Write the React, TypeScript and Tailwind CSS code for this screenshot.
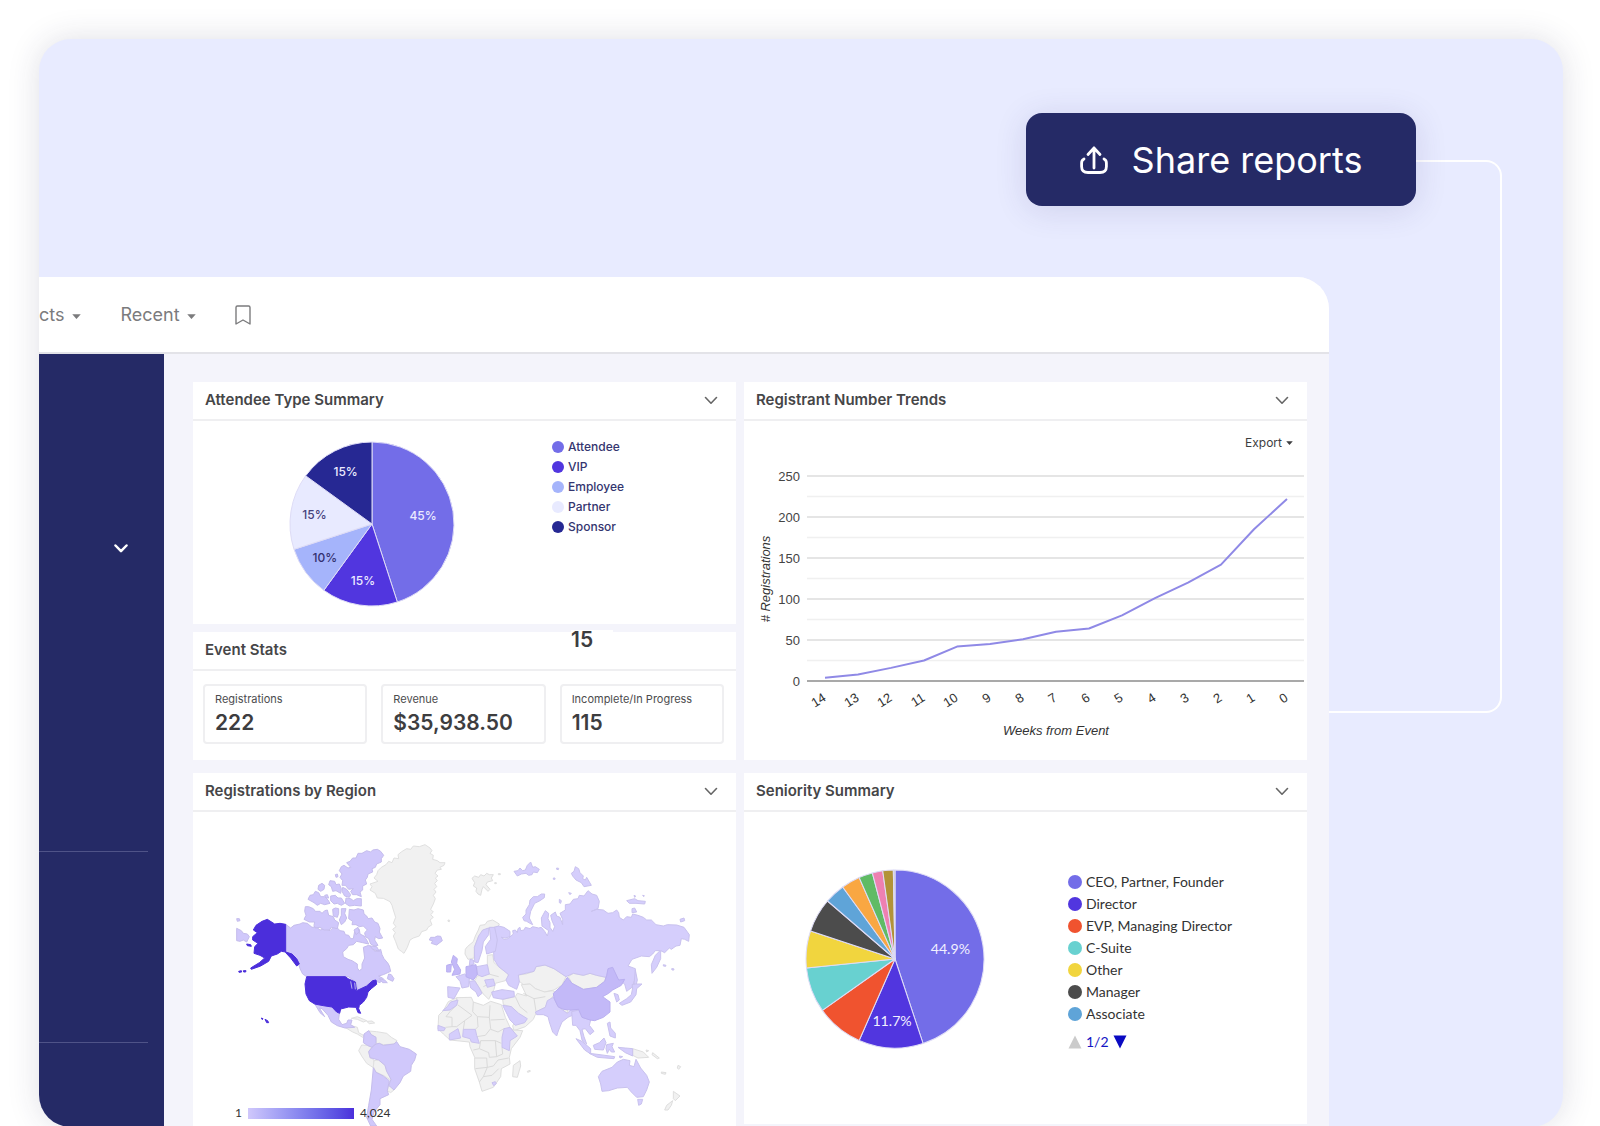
import { useId } from "react";
import type { ReactNode } from "react";

interface Slice {
  value: number;
  color: string;
  label?: string;
  text?: string;
  textColor?: string;
}

const attendeeTypes: Slice[] = [
  { label: "Attendee", value: 45, color: "#736de8", text: "45%", textColor: "#ecebff" },
  { label: "VIP", value: 15, color: "#5136df", text: "15%", textColor: "#ecebff" },
  { label: "Employee", value: 10, color: "#a5b4fb", text: "10%", textColor: "#34306f" },
  { label: "Partner", value: 15, color: "#e8eaff", text: "15%", textColor: "#45427c" },
  { label: "Sponsor", value: 15, color: "#262893", text: "15%", textColor: "#ecebff" },
];

const seniority: Slice[] = [
  { label: "CEO, Partner, Founder", value: 44.9, color: "#736de8", text: "44.9%", textColor: "#f1f0ff" },
  { label: "Director", value: 11.7, color: "#5136df", text: "11.7%", textColor: "#f1f0ff" },
  { label: "EVP, Managing Director", value: 8.6, color: "#f0532f" },
  { label: "C-Suite", value: 8.2, color: "#68d1d0" },
  { label: "Other", value: 6.7, color: "#f1d53e" },
  { label: "Manager", value: 6.2, color: "#4c4c4c" },
  { label: "Associate", value: 3.7, color: "#5fa4d8" },
  { value: 3.4, color: "#f9a742" },
  { value: 2.5, color: "#60bb65" },
  { value: 1.9, color: "#ee80b1" },
  { value: 1.9, color: "#b29338" },
  { value: 0.3, color: "#c9c9c9" },
];

const stats = [
  { label: "Registrations", value: "222" },
  { label: "Revenue", value: "$35,938.50" },
  { label: "Incomplete/In Progress", value: "115" },
];

const trend = [4, 8, 16, 25, 42, 45, 51, 60, 64, 80, 101, 120, 142, 185, 222];

function Chevron({ className }: { className?: string }) {
  return (
    <svg viewBox="0 0 14 9" className={className} fill="none" stroke="currentColor" strokeLinecap="round" strokeLinejoin="round">
      <path d="M1.5 1.5 7 7.2l5.5-5.7" />
    </svg>
  );
}

function Caret({ className }: { className?: string }) {
  return (
    <svg viewBox="0 0 10 6" className={className} fill="currentColor">
      <path d="M.3.4h9.4L5 5.6z" />
    </svg>
  );
}

function Card({ title, collapsible = true, children }: { title: string; collapsible?: boolean; children: ReactNode }) {
  return (
    <section className="relative bg-white">
      <header className="flex h-[39px] items-center justify-between border-b-2 border-[#efeff1] pl-3 pr-[18px]">
        <h2 className="text-[15px] font-semibold text-[#464648]">{title}</h2>
        {collapsible && (
          <button type="button" aria-label={`Collapse ${title}`} className="text-[#666]">
            <Chevron className="h-[9px] w-[14px] stroke-[1.6]" />
          </button>
        )}
      </header>
      {children}
    </section>
  );
}

function Pie({ slices, r, className, textClass }: { slices: Slice[]; r: number; className: string; textClass: string }) {
  const total = slices.reduce((sum, s) => sum + s.value, 0);
  const point = (share: number, dist: number) => {
    const a = share * Math.PI * 2;
    return [Math.sin(a) * dist, -Math.cos(a) * dist];
  };
  let start = 0;
  return (
    <svg viewBox={`${-r - 1} ${-r - 1} ${r * 2 + 2} ${r * 2 + 2}`} className={className}>
      {slices.map((s) => {
        const from = start / total;
        start += s.value;
        const to = start / total;
        const [x1, y1] = point(from, r);
        const [x2, y2] = point(to, r);
        // narrow slices carry their label nearer the rim
        const [tx, ty] = point((from + to) / 2, r * (s.value > 20 ? 0.63 : 0.71));
        return (
          <g key={s.color}>
            <path
              d={`M0 0L${x1} ${y1}A${r} ${r} 0 ${to - from > 0.5 ? 1 : 0} 1 ${x2} ${y2}Z`}
              fill={s.color}
              stroke="#dedcf6"
              strokeWidth={1}
              strokeLinejoin="round"
            />
            {s.text && (
              <text x={tx} y={ty} dy="0.3em" textAnchor="middle" fill={s.textColor} className={textClass}>
                {s.text}
              </text>
            )}
          </g>
        );
      })}
    </svg>
  );
}

function TrendChart() {
  const y = (v: number) => 228 - v * 0.82;
  const x = (i: number) => 81 + i * 33;
  return (
    <svg viewBox="0 0 563 307" className="w-full font-['Liberation_Sans',Arial,sans-serif] text-[13px]">
      {[25, 75, 125, 175, 225].map((v) => (
        <path key={v} d={`M63 ${y(v)}H560`} stroke="#f0f0f0" strokeWidth={1.5} />
      ))}
      {[0, 50, 100, 150, 200, 250].map((v) => (
        <g key={v}>
          <path d={`M63 ${y(v)}H560`} stroke={v === 0 ? "#8c8c8c" : "#dcdcdc"} strokeWidth={1.5} />
          <text x={56} y={y(v)} dy="0.36em" textAnchor="end" fill="#444">
            {v}
          </text>
        </g>
      ))}
      <polyline
        points={trend.map((v, i) => `${x(i)},${y(v)}`).join(" ")}
        fill="none"
        stroke="#8f89e6"
        strokeWidth={2}
        strokeLinejoin="round"
      />
      {trend.map((_, i) => (
        <text key={i} textAnchor="end" fill="#333" transform={`translate(${x(i) + 2} 247) rotate(-32)`}>
          {14 - i}
        </text>
      ))}
      <text textAnchor="middle" fill="#333" className="italic" transform="translate(26 126) rotate(-90)">
        # Registrations
      </text>
      <text x={312} y={282} textAnchor="middle" fill="#333" className="italic">
        Weeks from Event
      </text>
    </svg>
  );
}

// Countries without registrations
const emptyWest = [
  "M545 65L560 56 572 58 580 48 598 50 615 44 630 54 636 62 630 70 640 76 638 88 652 92 660 98 675 98 672 106 660 112 664 118 652 120 645 130 654 138 646 144 652 152 644 160 650 170 642 178 648 186 640 196 646 206 640 222 632 238 640 246 632 254 640 262 630 270 636 284 624 292 620 300 605 305 598 318 580 324 570 330 562 352 552 370 544 364 535 357 527 335 520 318 526 308 518 298 528 290 520 280 527 262 520 240 516 226 510 215 490 205 472 204 466 190 450 180 456 170 450 162 474 154 462 144 470 134 474 122 484 112 498 104 506 94 516 98 522 84 536 86 534 74Z",
  "M375 592L392 586 412 592 416 608 434 618 428 622 412 612 398 606Z",
  "M394 565L412 560 440 572 430 576 412 568ZM440 574l16-1 8 6-16 2Z",
  "M446 603L470 605 500 610 514 622 531 632 522 642 490 644 478 640 468 642 468 622 454 614Z",
  "M425 645L442 646 456 652 446 664 450 683 462 690 460 713 440 700 425 678 416 662Z",
  "M462 692L476 690 495 706 500 724 512 736 512 750 490 736 468 726 460 710Z",
  "M504 768l12 0 6 12-10 8-10-6Z",
];
const emptyEast = [
  "M126 145L134 138 146 142 152 134 162 138 170 130 178 134 190 134 184 144 188 152 172 156 168 164 180 178 174 184 160 170 156 178 152 196 144 192 138 184 140 174 130 168 134 158Z",
  "M105 372L106 358 112 350 130 335 136 318 145 300 150 286 165 284 172 274 188 270 208 282 204 290 194 292 168 296 146 318 134 350 132 384 114 388Z",
  "M172 376L188 374 192 398 206 410 232 430 236 438 226 452 196 460 192 478 176 508 160 492 148 474 134 452 142 438 176 432 172 404Z",
  "M265 435L288 432 312 424 318 410 345 405 372 416 408 440 396 465 372 480 342 486 316 476 300 462 280 464 266 452Z",
  "M274 464L300 462 316 476 344 486 368 482 378 488 352 518 346 532 320 545 310 568 286 590 252 602 248 588 262 560 244 530 220 524 218 508 256 500 262 490 290 498Z",
  "M415 440L430 430 460 436 480 430 500 436 528 442 524 454 500 472 460 478 426 460Z",
  "M384 530L414 542 412 550 386 540Z",
  "M55 515L80 503 124 502 130 516 160 526 182 514 214 524 226 562 240 592 250 600 278 602 270 622 244 656 238 682 240 702 214 716 212 740 190 772 156 784 148 756 134 716 134 682 120 650 118 636 60 630 40 612 24 596 26 556 40 542Z",
  "M250 706L270 692 272 708 262 742 248 740Z",
  "M608 656L640 666 656 682 624 684 608 676ZM648 660l8 2-6 4ZM668 668l20 16-6 2-16-12ZM694 726l14 2-2 5-12-3ZM744 706l8 4-6 8-4-4Z",
  "M730 784L750 798 736 812 730 806ZM728 812l-4 14-10 14-10 0 6-14Z",
  "M205 131l6 0 0 3-6 0ZM54 270l5 1-1 4-4-1ZM194 158l5 0 0 3-5 0ZM292 724l8-3 1 3-8 3Z",
];

// Countries with at least one registration
const lightWest = [
  "M50 295L64 302 70 310 82 312 88 320 80 336 70 330 60 334 50 332ZM50 266l8 0 2 6-8 2Z",
  "M197 283L212 294 222 286 240 282 248 278 262 280 276 292 288 290 300 300 316 296 330 302 342 290 350 292 360 302 372 304 376 314 386 316 392 326 400 326 404 304 418 298 420 312 432 318 440 330 446 342 428 338 410 334 400 344 386 346 380 356 368 366 370 380 384 388 396 392 412 402 412 414 418 422 426 416 426 402 434 384 430 352 446 346 456 350 462 362 470 364 482 358 486 374 492 386 504 400 508 408 512 424 490 434 476 438 490 446 480 458 468 454 458 452 440 466 414 482 408 456 385 440 260 440 248 432 240 416 236 402 215 372 197 366Z",
  "M506 432L514 434 522 446 518 454 502 446ZM478 446l16 4 8 8-14 0Z",
  "M380 98L390 94 398 84 408 84 414 70 426 70 440 62 452 66 458 60 472 58 482 64 491 76 484 86 484 96 470 102 466 112 456 116 458 126 444 132 442 142 436 150 440 162 428 168 428 180 420 186 424 200 410 194 398 194 392 184 400 176 386 178 376 166 366 166 368 152 360 142 366 132 358 122 364 110 372 106 384 114 392 112Z",
  "M378 204L392 206 400 212 410 206 424 206 424 228 404 226 388 228 376 220Z",
  "M330 152l14 2 4 10 10-2 6 14-2 14-14-8-10 2-4-14-8-6ZM296 166l10-6 8 6-2 12-10 6-8-6ZM264 208l6-12 10-2 6-10 10 4 6 12 12 0 10 10 6 10-16 4-12-4-10 6-10-8ZM332 198l14-2 8 8 10 0 10 16-10 6-12-6-10 2-10-10ZM346 134l6-2 2 8-6 2ZM368 172l12 6 12 16-4 8-14-4-8-14ZM314 196l8-2 4 10-8 0Z",
  "M256 230L266 230 280 236 286 244 300 244 306 250 314 242 322 240 326 256 340 260 344 270 356 278 352 296 334 292 328 300 312 300 300 292 286 294 282 286 284 276 268 276 252 268 258 256 254 244ZM338 238l8-4 10 2 0 14-4 12-12-4ZM364 236l14 0-4 14 6 14-6 12-10 8-6-14 6-14Z",
  "M388 238L402 240 414 236 430 240 432 252 440 258 444 266 456 264 464 276 474 280 480 296 478 306 488 324 476 326 466 320 464 330 474 346 462 348 452 342 446 326 436 320 434 308 442 300 430 288 418 290 408 284 396 284 398 274 386 266ZM402 300l12-8 4 14-10 8ZM450 348l20 2 8 14-20-6Z",
  "M632 322L644 322 652 318 662 319 667 332 650 345 634 340 638 332 628 330Z",
  "M285 523L310 527 335 531 350 546 358 551 356 568 366 584 380 580 384 570 396 570 392 584 404 592 375 594 352 587 334 576 324 556 306 536 298 534 314 560 300 548Z",
  "M432 612L446 602 454 614 468 622 468 640 456 652 442 646 430 638Z",
  "M446 665L456 652 468 642 478 640 490 646 522 642 530 635 540 650 568 658 589 672 584 690 574 706 572 724 550 738 540 758 522 780 506 766 513 748 500 724 495 706 476 690 450 683Z",
  "M460 713L468 727 490 738 508 752 502 782 506 794 480 806 480 824 462 846 456 868 470 888 452 888 440 862 446 826 454 780Z",
];
const lightEast = [
  "M190 350L200 330 192 292 206 288 222 292 240 304 240 320 226 324 214 322 222 328 234 326 250 312 248 302 256 300 262 308 264 296 270 292 272 302 282 300 286 292 300 296 308 290 326 294 334 292 344 304 352 318 356 302 336 288 334 264 346 242 356 250 354 266 360 278 360 292 368 304 374 290 366 272 362 256 376 246 380 258 390 262 398 284 398 268 390 250 406 240 406 224 420 222 430 208 444 206 448 196 462 198 474 182 486 192 500 196 508 214 504 236 484 244 500 238 520 240 534 250 548 248 560 240 566 248 568 262 580 270 590 260 604 262 608 252 624 256 640 262 650 270 664 270 678 284 700 288 712 284 740 285 762 292 778 314 776 334 764 328 754 326 750 346 738 348 724 358 718 354 704 368 692 362 692 386 680 412 666 430 664 404 676 376 690 362 676 362 668 372 658 380 634 378 606 388 594 408 616 416 617 442 606 472 590 484 584 462 566 450 550 435 528 442 500 436 480 430 460 436 430 430 408 440 372 416 345 405 318 410 312 424 265 435 268 456 260 478 236 466 228 450 236 434 206 410 192 388Z",
  "M344 192L334 192 322 200 310 200 300 210 298 224 288 240 288 252 278 262 282 272 290 274 300 280 308 284 298 264 302 244 314 220 330 212 343 203Z",
  "M252 124L264 122 270 114 278 122 286 120 292 106 302 96 308 112 316 110 328 118 322 128 310 126 306 134 296 136 288 130 274 132 262 138ZM424 130l8-6 4-14 10 6 4 12 10 10-2 8 8 4 4-8 14 24-22 4-8-12-16-8-10-12ZM590 212l24-6 10 6 22 2-2 8-26-2-20 0ZM606 236l8-2 6 12-14 2ZM750 268l12-4 2 8-12 4ZM416 188l8 2-4 4ZM388 208l6 4-2 8-4-2ZM370 144l5 0 0 4-5 0ZM380 114l6 1-1 4-5-1ZM612 196l5 2-3 4ZM638 196l5 1-2 3ZM700 404l8 2-1 3-7-1ZM725 416l6 0 1 4-6 0Z",
  "M616 420L622 450 618 466 612 462Z",
  "M134 396L133 352 146 318 158 300 176 294 176 314 160 336 156 362 144 398Z",
  "M178 292L194 292 202 330 196 364 170 372 166 350 182 328Z",
  "M140 410L172 404 178 432 156 440 142 434Z",
  "M78 440L104 432 118 446 116 470 96 474 90 454Z",
  "M53 470L90 474 82 488 72 506 54 502Z",
  "M118 454L134 452 148 474 156 490 144 500 138 486 122 474Z",
  "M164 450L190 447 195 466 172 472Z",
  "M120 388l10 2 2 12-14 4Z",
  "M185 486L216 479 252 484 253 500 218 508 190 503Z",
  "M218 526L244 530 266 550 292 566 284 578 256 586 240 570Z",
  "M62 516L84 510 80 526 60 540 38 542 52 530Z",
  "M24 586L46 594 42 602 24 602Z",
  "M58 612L84 596 92 624 58 630Z",
  "M100 598L136 598 140 616 148 640 124 636 120 626 98 620Z",
  "M222 596L240 592 262 618 240 632 238 662 216 652 216 622Z",
  "M186 758l10-3 3 6-8 6Z",
  "M316 546L346 532 352 512 370 502 384 530 412 550 422 540 446 538 440 550 414 562 396 576 386 600 380 618 368 606 358 576 354 560 340 554 320 554Z",
  "M425 545L446 540 456 562 482 570 478 586 492 604 480 614 466 596 456 598 462 620 470 642 456 630 450 602 438 586 428 586Z",
  "M438 626L456 634 482 656 482 672 464 660ZM478 670l32 4 44 6-2 6-50-4ZM490 646l18-8 14-14 6 14-8 22-26-2ZM530 644l20-4-4 10 8 16-10 0-6-8-6 12-4-14ZM532 580l8-4 2 18 14 16 0 14-16-6ZM564 652l22 2 22 2 0 22-22-10ZM568 678l10 2-8 4Z",
  "M505 740L516 724 546 712 562 696 580 688 600 692 598 706 612 710 618 688 632 714 650 736 658 756 650 780 640 800 620 802 604 786 592 772 562 774 536 782 516 784 512 762ZM623 808l15 0-4 14-8 4Z",
  "M568 520L590 506 604 494 608 474 606 464 616 462 636 462 620 476 618 494 602 516 576 526ZM552 490l12 4 4 16-8 6Z",
];
const mediumEast = [
  "M370 490L396 466 412 442 426 460 460 478 500 472 524 454 530 436 534 416 548 412 566 450 584 448 574 466 548 480 536 490 518 500 540 516 540 546 520 562 494 572 480 570 456 562 446 538 422 540 400 538 384 530 372 504Z",
  "M108 410L138 404 142 434 130 450 108 440Z",
  "M70 376L82 386 80 400 92 420 90 432 66 436 74 418 64 396ZM50 406L64 402 62 426 50 426Z",
];
const unitedStates = [
  "M197 283L180 280 164 282 142 268 126 274 108 286 100 300 112 308 98 320 98 330 114 340 104 350 102 370 120 376 134 384 118 398 92 414 94 418 122 408 146 394 154 378 172 372 184 364 197 366 216 372 230 386 238 402 230 408 212 384 197 368Z",
  "M260 440L376 440 384 446 406 456 410 482 440 468 458 452 468 450 470 463 454 476 444 486 440 502 430 516 418 526 416 536 422 550 414 548 408 532 386 531 362 537 359 550 350 546 336 531 310 527 284 522 268 512 258 492 255 462Z",
  "M56 424l8-2 1 4-8 1ZM70 422l8 0-1 4-6 0ZM80 342l12 2 2 5-12-2ZM124 564l5 2-2 3ZM135 568l8 4 3 6-6 0Z",
];

const africaBorders =
  "M80 503L80 525 60 545 48 560 66 562 66 590 46 592M84 525L126 556 104 572 100 598M130 516L128 545 142 560 178 562 180 526M142 560L144 590 136 598M178 562L182 596 166 616 140 620M182 570L224 568M222 596L204 606 182 598M104 572L80 590 66 590M152 632L196 632 214 640M152 632L148 656 130 660M196 632L200 680 178 682 176 668 148 656M134 684L170 684 172 712 136 716M172 712L160 740 148 756M172 712L190 708 204 690 236 684M160 740L186 736 206 716M200 680L218 672 216 652";
const asiaBorders =
  "M280 490L312 506 346 500M256 500L270 530 292 548M312 506L318 544M176 432L206 440M160 470L176 462";

function WorldMap() {
  const draw = (paths: string[], fill: string, stroke: string) =>
    paths.map((d, i) => <path key={i} d={d} fill={fill} stroke={stroke} strokeWidth={3} strokeLinejoin="round" />);
  return (
    <svg viewBox="-81 -54 1629 945" className="w-full" role="img" aria-label="World map of registrations">
      {draw(emptyWest, "#f1f1f1", "#e0e0e0")}
      {draw(lightWest, "#d0c8fb", "#c5bdec")}
      {draw(unitedStates, "#4b2edb", "#4b2edb")}
      <path d="M392 454l4 22M404 458l2 20" stroke="#b8aff0" strokeWidth={3} />
      <g transform="translate(630 0)">
        {draw(emptyEast, "#f1f1f1", "#dedede")}
        <path d={africaBorders} fill="none" stroke="#dadada" strokeWidth={3} />
        <path d={asiaBorders} fill="none" stroke="#dadada" strokeWidth={3} />
        {draw(lightEast, "#d5cefc", "#c9c2ee")}
        {draw(mediumEast, "#c3b9f8", "#b9aff0")}
      </g>
    </svg>
  );
}

function MapScale() {
  const id = useId();
  return (
    <div className="absolute bottom-1 left-[42px] flex items-center gap-1.5 font-['Lato',sans-serif] text-xs leading-5 text-[#333]">
      <span id={id}>1</span>
      <div aria-labelledby={id} className="h-[11px] w-[106px] bg-linear-to-r from-[#d0c8fb] to-[#4b2edb]" />
      <span>4,024</span>
    </div>
  );
}

function AttendeeCard() {
  return (
    <Card title="Attendee Type Summary">
      <div className="flex h-[203px] items-start pl-24 pt-4">
        <Pie slices={attendeeTypes} r={82} className="mt-1 size-[166px]" textClass="text-xs font-medium" />
        <ul className="ml-[97px] text-[#34356f]">
          {attendeeTypes.map((s) => (
            <li key={s.label} className="flex items-center gap-1 text-xs leading-5 font-medium">
              <span className="size-3 rounded-full" style={{ backgroundColor: s.color }} />
              {s.label}
            </li>
          ))}
        </ul>
      </div>
    </Card>
  );
}

function StatsCard() {
  return (
    <Card title="Event Stats" collapsible={false}>
      <span className="absolute -top-0.5 left-[378px] w-[42px] bg-white text-[21px] leading-5 font-semibold text-[#3d3d3f]">15</span>
      <dl className="grid grid-cols-3 gap-3.5 pb-4 pl-2.5 pr-3 pt-[13px]">
        {stats.map((s) => (
          <div key={s.label} className="h-[60px] rounded border-2 border-[#efeff1] pl-2.5 pt-1">
            <dt className="text-[11px] leading-[18px] text-[#4c4c4e]">{s.label}</dt>
            <dd className="text-[21px] leading-[30px] font-semibold text-[#3d3d3f]">{s.value}</dd>
          </div>
        ))}
      </dl>
    </Card>
  );
}

function TrendCard() {
  return (
    <Card title="Registrant Number Trends">
      <div className="flex justify-end pr-3.5 pt-3">
        <button type="button" className="flex items-center gap-1 text-xs leading-5 text-[#3d3d3f]">
          Export
          <Caret className="w-[7px]" />
        </button>
      </div>
      <TrendChart />
    </Card>
  );
}

function SeniorityCard() {
  return (
    <Card title="Seniority Summary">
      <div className="flex h-[312px] items-start pl-[61px] pt-[57px] font-['Lato',sans-serif]">
        <Pie slices={seniority} r={88} className="size-[180px] shrink-0" textClass="text-sm" />
        <div className="ml-[83px] mt-0.5 text-sm text-[#333]">
          <ul>
            {seniority
              .filter((s) => s.label)
              .map((s) => (
                <li key={s.label} className="flex items-center gap-1 leading-[22px]">
                  <span className="size-[14px] rounded-full" style={{ backgroundColor: s.color }} />
                  {s.label}
                </li>
              ))}
          </ul>
          <div className="mt-1.5 flex items-center gap-1 leading-[22px] text-[#1515c4]">
            <button type="button" aria-label="Previous page" disabled className="text-[#cbcbcb]">
              <svg viewBox="0 0 14 14" className="size-[14px]" fill="currentColor">
                <path d="M7 .5 13.5 13.5H.5z" />
              </svg>
            </button>
            1/2
            <button type="button" aria-label="Next page" className="text-[#0a0ac2]">
              <svg viewBox="0 0 14 14" className="size-[14px]" fill="currentColor">
                <path d="M.5.5h13L7 13.5z" />
              </svg>
            </button>
          </div>
        </div>
      </div>
    </Card>
  );
}

export default function App() {
  return (
    <div className="h-screen overflow-hidden bg-white pl-[39px] pr-[37px] pt-[39px] font-['Inter',sans-serif]">
      <div className="relative overflow-hidden rounded-[32px] bg-[#e8ebff] shadow-[0_0_32px_rgba(40,40,80,0.15)]">
        {/* connector between the button and the dashboard */}
        <div className="absolute right-[61px] top-[121px] h-[553px] w-[174px] rounded-r-2xl border-2 border-l-0 border-white" />

        <div className="flex h-[238px] justify-end pr-[147px] pt-[74px]">
          <button
            type="button"
            className="relative flex h-[93px] w-[390px] items-center justify-center gap-6 rounded-2xl bg-[#252a66] text-4xl text-white shadow-[0_4px_32px_rgba(60,50,120,0.14)]"
          >
            <svg viewBox="0 0 28 28" className="size-7" fill="none" stroke="currentColor" strokeWidth={2.8} strokeLinecap="round" strokeLinejoin="round">
              <path d="M14 22V2M8 8.5 14 2l6 6.5" />
              <path d="M4 13c-1.6.8-2.4 2-2.4 4v3.5c0 4 2.4 6 6.4 6h12c4 0 6.4-2 6.4-6V17c0-2-.8-3.2-2.4-4" />
            </svg>
            Share reports
          </button>
        </div>

        <div className="relative mr-[234px] overflow-hidden rounded-tr-[32px] bg-[#f4f4fb]">
          <nav className="flex h-[77px] items-center border-b-2 border-[#e3e3e8] bg-white text-lg text-[#7b7b7d]">
            <button type="button" className="flex items-center gap-[7px]">
              cts
              <Caret className="mt-1 w-[9px]" />
            </button>
            <button type="button" className="ml-10 flex items-center gap-[7px]">
              Recent
              <Caret className="mt-1 w-[9px]" />
            </button>
            <button type="button" aria-label="Bookmarks" className="ml-[39px]">
              <svg viewBox="0 0 16 20" className="h-5 w-4" fill="none" stroke="currentColor" strokeWidth={1.4} strokeLinejoin="round">
                <path d="M2.4 1h11.2A1.4 1.4 0 0 1 15 2.4V19l-7-4-7 4V2.4A1.4 1.4 0 0 1 2.4 1z" />
              </svg>
            </button>
          </nav>

          <div className="flex">
            <aside className="w-[125px] shrink-0 bg-[#252a66] pr-4 text-white">
              <div className="flex h-[498px] justify-end border-b border-[#4f5388] pr-5 pt-[190px]">
                <button type="button" aria-label="Expand menu" className="h-[9px]">
                  <Chevron className="h-[9px] w-[14px] stroke-[2.5]" />
                </button>
              </div>
              <div className="h-[191px] border-b border-[#4f5388]" />
            </aside>

            <main className="grid grow grid-cols-[543fr_563fr] gap-x-2 pl-[29px] pr-[22px] pt-7">
              <div>
                <AttendeeCard />
                <div className="mt-2">
                  <StatsCard />
                </div>
                <div className="mt-[13px]">
                  <Card title="Registrations by Region">
                    <WorldMap />
                    <MapScale />
                  </Card>
                </div>
              </div>
              <div>
                <TrendCard />
                <div className="mt-[13px]">
                  <SeniorityCard />
                </div>
              </div>
            </main>
          </div>
        </div>
      </div>
    </div>
  );
}
